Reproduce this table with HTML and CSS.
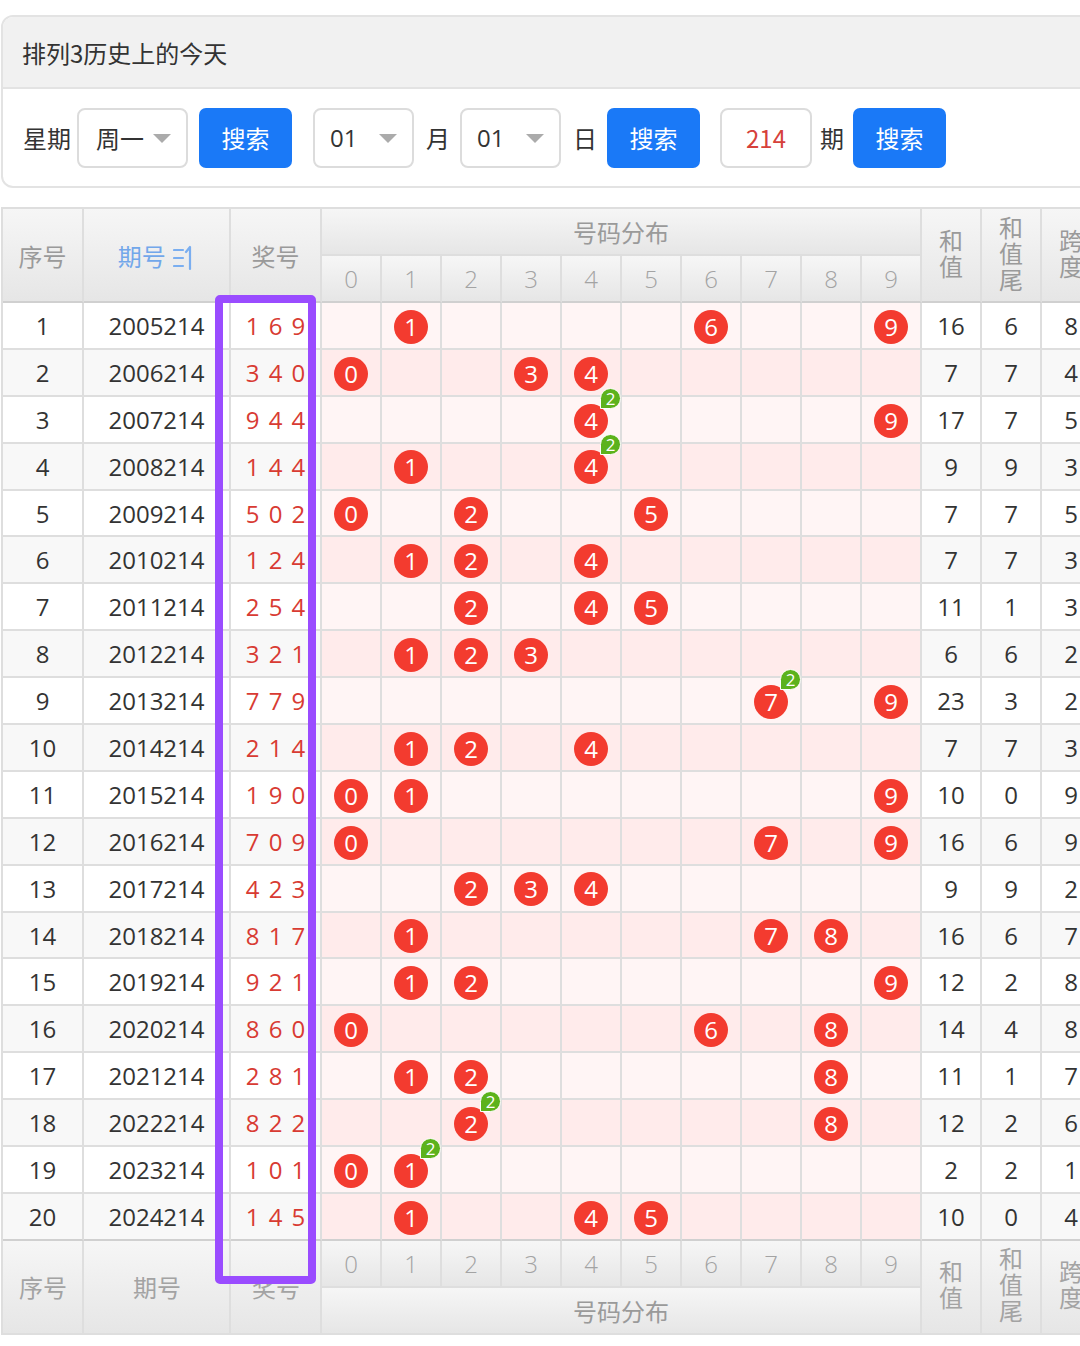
FILE: index.html
```html
<!DOCTYPE html>
<html lang="zh-CN">
<head>
<meta charset="utf-8">
<title>排列3历史上的今天</title>
<link rel="stylesheet" href="styles.css">
</head>
<body>
<div class="card">
  <div class="card-head">排列3历史上的今天</div>
  <div class="search">
    <span class="lbl lbl-week">星期</span>
    <div class="select sel-week"><span>周一</span><i class="caret"></i></div>
    <button class="btn btn-1">搜索</button>
    <div class="select sel-num"><span>01</span><i class="caret"></i></div>
    <span class="lbl lbl-mid">月</span>
    <div class="select sel-num"><span>01</span><i class="caret"></i></div>
    <span class="lbl lbl-mid">日</span>
    <button class="btn btn-2">搜索</button>
    <div class="input-issue">214</div>
    <span class="lbl lbl-issue">期</span>
    <button class="btn btn-3">搜索</button>
  </div>
</div>

<div class="table-wrap">
  <table class="trend">
    <colgroup>
      <col class="c-idx"><col class="c-issue"><col class="c-win">
      <col class="c-d"><col class="c-d"><col class="c-d"><col class="c-d"><col class="c-d">
      <col class="c-d"><col class="c-d"><col class="c-d"><col class="c-d"><col class="c-d">
      <col class="c-d"><col class="c-d"><col class="c-d">
    </colgroup>
    <thead>
      <tr>
        <th rowspan="2">序号</th>
        <th rowspan="2" class="sortable">期号 <svg class="sort-ico" viewBox="0 0 22 26" width="22" height="26"><path d="M1 5h9M1 13h9M1 21h9M17 2v22M17 2l-4 5" fill="none" stroke="#7aaef0" stroke-width="2.2" stroke-linecap="round"/></svg></th>
        <th rowspan="2">奖号</th>
        <th colspan="10" class="group">号码分布</th>
        <th rowspan="2"><span class="stack">和值</span></th>
        <th rowspan="2"><span class="stack">和值尾</span></th>
        <th rowspan="2"><span class="stack">跨度</span></th>
      </tr>
      <tr class="digits">
        <th>0</th><th>1</th><th>2</th><th>3</th><th>4</th><th>5</th><th>6</th><th>7</th><th>8</th><th>9</th>
      </tr>
    </thead>
    <tbody>
      <tr><td>1</td><td>2005214</td><td class="win">1 6 9</td><td class="d"></td><td class="d"><span class="ball">1</span></td><td class="d"></td><td class="d"></td><td class="d"></td><td class="d"></td><td class="d"><span class="ball">6</span></td><td class="d"></td><td class="d"></td><td class="d"><span class="ball">9</span></td><td>16</td><td>6</td><td>8</td></tr>
      <tr><td>2</td><td>2006214</td><td class="win">3 4 0</td><td class="d"><span class="ball">0</span></td><td class="d"></td><td class="d"></td><td class="d"><span class="ball">3</span></td><td class="d"><span class="ball">4</span></td><td class="d"></td><td class="d"></td><td class="d"></td><td class="d"></td><td class="d"></td><td>7</td><td>7</td><td>4</td></tr>
      <tr><td>3</td><td>2007214</td><td class="win">9 4 4</td><td class="d"></td><td class="d"></td><td class="d"></td><td class="d"></td><td class="d"><span class="ball">4<i class="badge">2</i></span></td><td class="d"></td><td class="d"></td><td class="d"></td><td class="d"></td><td class="d"><span class="ball">9</span></td><td>17</td><td>7</td><td>5</td></tr>
      <tr><td>4</td><td>2008214</td><td class="win">1 4 4</td><td class="d"></td><td class="d"><span class="ball">1</span></td><td class="d"></td><td class="d"></td><td class="d"><span class="ball">4<i class="badge">2</i></span></td><td class="d"></td><td class="d"></td><td class="d"></td><td class="d"></td><td class="d"></td><td>9</td><td>9</td><td>3</td></tr>
      <tr><td>5</td><td>2009214</td><td class="win">5 0 2</td><td class="d"><span class="ball">0</span></td><td class="d"></td><td class="d"><span class="ball">2</span></td><td class="d"></td><td class="d"></td><td class="d"><span class="ball">5</span></td><td class="d"></td><td class="d"></td><td class="d"></td><td class="d"></td><td>7</td><td>7</td><td>5</td></tr>
      <tr><td>6</td><td>2010214</td><td class="win">1 2 4</td><td class="d"></td><td class="d"><span class="ball">1</span></td><td class="d"><span class="ball">2</span></td><td class="d"></td><td class="d"><span class="ball">4</span></td><td class="d"></td><td class="d"></td><td class="d"></td><td class="d"></td><td class="d"></td><td>7</td><td>7</td><td>3</td></tr>
      <tr><td>7</td><td>2011214</td><td class="win">2 5 4</td><td class="d"></td><td class="d"></td><td class="d"><span class="ball">2</span></td><td class="d"></td><td class="d"><span class="ball">4</span></td><td class="d"><span class="ball">5</span></td><td class="d"></td><td class="d"></td><td class="d"></td><td class="d"></td><td>11</td><td>1</td><td>3</td></tr>
      <tr><td>8</td><td>2012214</td><td class="win">3 2 1</td><td class="d"></td><td class="d"><span class="ball">1</span></td><td class="d"><span class="ball">2</span></td><td class="d"><span class="ball">3</span></td><td class="d"></td><td class="d"></td><td class="d"></td><td class="d"></td><td class="d"></td><td class="d"></td><td>6</td><td>6</td><td>2</td></tr>
      <tr><td>9</td><td>2013214</td><td class="win">7 7 9</td><td class="d"></td><td class="d"></td><td class="d"></td><td class="d"></td><td class="d"></td><td class="d"></td><td class="d"></td><td class="d"><span class="ball">7<i class="badge">2</i></span></td><td class="d"></td><td class="d"><span class="ball">9</span></td><td>23</td><td>3</td><td>2</td></tr>
      <tr><td>10</td><td>2014214</td><td class="win">2 1 4</td><td class="d"></td><td class="d"><span class="ball">1</span></td><td class="d"><span class="ball">2</span></td><td class="d"></td><td class="d"><span class="ball">4</span></td><td class="d"></td><td class="d"></td><td class="d"></td><td class="d"></td><td class="d"></td><td>7</td><td>7</td><td>3</td></tr>
      <tr><td>11</td><td>2015214</td><td class="win">1 9 0</td><td class="d"><span class="ball">0</span></td><td class="d"><span class="ball">1</span></td><td class="d"></td><td class="d"></td><td class="d"></td><td class="d"></td><td class="d"></td><td class="d"></td><td class="d"></td><td class="d"><span class="ball">9</span></td><td>10</td><td>0</td><td>9</td></tr>
      <tr><td>12</td><td>2016214</td><td class="win">7 0 9</td><td class="d"><span class="ball">0</span></td><td class="d"></td><td class="d"></td><td class="d"></td><td class="d"></td><td class="d"></td><td class="d"></td><td class="d"><span class="ball">7</span></td><td class="d"></td><td class="d"><span class="ball">9</span></td><td>16</td><td>6</td><td>9</td></tr>
      <tr><td>13</td><td>2017214</td><td class="win">4 2 3</td><td class="d"></td><td class="d"></td><td class="d"><span class="ball">2</span></td><td class="d"><span class="ball">3</span></td><td class="d"><span class="ball">4</span></td><td class="d"></td><td class="d"></td><td class="d"></td><td class="d"></td><td class="d"></td><td>9</td><td>9</td><td>2</td></tr>
      <tr><td>14</td><td>2018214</td><td class="win">8 1 7</td><td class="d"></td><td class="d"><span class="ball">1</span></td><td class="d"></td><td class="d"></td><td class="d"></td><td class="d"></td><td class="d"></td><td class="d"><span class="ball">7</span></td><td class="d"><span class="ball">8</span></td><td class="d"></td><td>16</td><td>6</td><td>7</td></tr>
      <tr><td>15</td><td>2019214</td><td class="win">9 2 1</td><td class="d"></td><td class="d"><span class="ball">1</span></td><td class="d"><span class="ball">2</span></td><td class="d"></td><td class="d"></td><td class="d"></td><td class="d"></td><td class="d"></td><td class="d"></td><td class="d"><span class="ball">9</span></td><td>12</td><td>2</td><td>8</td></tr>
      <tr><td>16</td><td>2020214</td><td class="win">8 6 0</td><td class="d"><span class="ball">0</span></td><td class="d"></td><td class="d"></td><td class="d"></td><td class="d"></td><td class="d"></td><td class="d"><span class="ball">6</span></td><td class="d"></td><td class="d"><span class="ball">8</span></td><td class="d"></td><td>14</td><td>4</td><td>8</td></tr>
      <tr><td>17</td><td>2021214</td><td class="win">2 8 1</td><td class="d"></td><td class="d"><span class="ball">1</span></td><td class="d"><span class="ball">2</span></td><td class="d"></td><td class="d"></td><td class="d"></td><td class="d"></td><td class="d"></td><td class="d"><span class="ball">8</span></td><td class="d"></td><td>11</td><td>1</td><td>7</td></tr>
      <tr><td>18</td><td>2022214</td><td class="win">8 2 2</td><td class="d"></td><td class="d"></td><td class="d"><span class="ball">2<i class="badge">2</i></span></td><td class="d"></td><td class="d"></td><td class="d"></td><td class="d"></td><td class="d"></td><td class="d"><span class="ball">8</span></td><td class="d"></td><td>12</td><td>2</td><td>6</td></tr>
      <tr><td>19</td><td>2023214</td><td class="win">1 0 1</td><td class="d"><span class="ball">0</span></td><td class="d"><span class="ball">1<i class="badge">2</i></span></td><td class="d"></td><td class="d"></td><td class="d"></td><td class="d"></td><td class="d"></td><td class="d"></td><td class="d"></td><td class="d"></td><td>2</td><td>2</td><td>1</td></tr>
      <tr><td>20</td><td>2024214</td><td class="win">1 4 5</td><td class="d"></td><td class="d"><span class="ball">1</span></td><td class="d"></td><td class="d"></td><td class="d"><span class="ball">4</span></td><td class="d"><span class="ball">5</span></td><td class="d"></td><td class="d"></td><td class="d"></td><td class="d"></td><td>10</td><td>0</td><td>4</td></tr>
    </tbody>
    <tfoot>
      <tr class="digits">
        <th rowspan="2">序号</th>
        <th rowspan="2">期号</th>
        <th rowspan="2">奖号</th>
        <th>0</th><th>1</th><th>2</th><th>3</th><th>4</th><th>5</th><th>6</th><th>7</th><th>8</th><th>9</th>
        <th rowspan="2"><span class="stack">和值</span></th>
        <th rowspan="2"><span class="stack">和值尾</span></th>
        <th rowspan="2"><span class="stack">跨度</span></th>
      </tr>
      <tr>
        <th colspan="10" class="group">号码分布</th>
      </tr>
    </tfoot>
  </table>
  <div class="highlight-box"></div>
</div>
</body>
</html>
```

FILE: styles.css
```css
html, body {
  margin: 0;
  padding: 0;
}
body {
  width: 1080px;
  overflow-x: hidden;
  background: #fff;
  color: #333;
  font-family: "Open Sans", "Noto Sans CJK SC", sans-serif;
}

/* ---------- search card ---------- */
.card {
  margin: 15px 0 0 1px;
  width: 1120px;
  border: 2px solid #e3e3e3;
  border-radius: 12px;
  overflow: hidden;
  box-sizing: border-box;
}
.card-head {
  height: 70px;
  background: #f1f1f1;
  border-bottom: 2px solid #e3e3e3;
  display: flex;
  align-items: center;
  padding-left: 19px;
  font-family: "Noto Sans CJK SC", sans-serif;
  font-size: 24px;
  color: #333;
}
.search {
  height: 97px;
  display: flex;
  align-items: center;
  padding-left: 20px;
  font-family: "Noto Sans CJK SC", sans-serif;
}
.lbl {
  font-size: 24px;
  color: #333;
}
.lbl-week { margin-right: 6px; }
.lbl-mid { margin: 0 10px 0 12px; }
.lbl-issue { margin: 0 9px 0 8px; }

.select {
  height: 60px;
  box-sizing: border-box;
  border: 2px solid #dcdcdc;
  border-radius: 8px;
  background: #fff;
  display: flex;
  align-items: center;
  position: relative;
  font-size: 24px;
  color: #333;
}
.sel-week {
  width: 111px;
  padding-left: 17px;
  margin-right: 11px;
}
.sel-num {
  width: 101px;
  padding-left: 15px;
  font-family: "Open Sans", sans-serif;
}
.caret {
  position: absolute;
  right: 15px;
  top: 24px;
  width: 0;
  height: 0;
  border-left: 9px solid transparent;
  border-right: 9px solid transparent;
  border-top: 9px solid #ababab;
}
.btn {
  width: 93px;
  height: 60px;
  border: 0;
  border-radius: 7px;
  background: #1a79f7;
  color: #fff;
  font-family: "Noto Sans CJK SC", sans-serif;
  font-size: 24px;
  padding: 0;
}
.btn-1 { margin-right: 21px; }
.btn-2 { margin-right: 20px; }
.input-issue {
  width: 92px;
  height: 60px;
  box-sizing: border-box;
  border: 2px solid #dcdcdc;
  border-radius: 8px;
  display: flex;
  align-items: center;
  justify-content: center;
  font-size: 24px;
  color: #d6413b;
}

/* ---------- trend table ---------- */
.table-wrap {
  position: relative;
  margin-top: 19px;
  width: 1110px;
}
.trend {
  margin-left: 1px;
  table-layout: fixed;
  border-collapse: separate;
  border-spacing: 0;
  width: 1101px;
  border-left: 2px solid #dedede;
  border-top: 2px solid #dedede;
  font-size: 24px;
}
.c-idx { width: 81px; }
.c-issue { width: 147px; }
.c-win { width: 91px; }
.c-d { width: 60px; }

.trend th,
.trend td {
  border-right: 2px solid #dedede;
  border-bottom: 2px solid #dedede;
  padding: 0;
  text-align: center;
  box-sizing: border-box;
}
.trend th {
  background: linear-gradient(#f6f6f6, #e6e6e6);
  color: #9a9a9a;
  font-weight: normal;
  font-family: "Noto Sans CJK SC", sans-serif;
  height: 47px;
}
.trend tr.digits th {
  font-family: "Open Sans", sans-serif;
  font-weight: 300;
  color: #a3a3a3;
}
.trend thead tr:last-child th,
.trend thead th[rowspan] {
  border-bottom-color: #d0d0d0;
}
.sortable {
  color: #72a7ea !important;
}
.sort-ico {
  vertical-align: -5px;
  margin-left: 2px;
}
.stack {
  display: inline-block;
  width: 1em;
  line-height: 26px;
  word-break: break-all;
}

.trend tbody td {
  height: 46.9px;
  color: #333;
  background: #fff;
}
.trend tbody tr:nth-child(even) td {
  background: #f8f8f8;
}
.trend tbody td.d {
  background: #fff5f5;
}
.trend tbody tr:nth-child(even) td.d {
  background: #ffebeb;
}
.trend tbody td.win {
  color: #d83b33;
  word-spacing: 3px;
}
.trend tbody tr:last-child td {
  border-bottom-color: #d0d0d0;
}

.ball {
  position: relative;
  display: inline-flex;
  align-items: center;
  justify-content: center;
  width: 34px;
  height: 34px;
  border-radius: 50%;
  background: #f33b2f;
  color: #fff;
  font-size: 24px;
  line-height: 1;
  vertical-align: middle;
}
.badge {
  position: absolute;
  left: 26px;
  top: -16px;
  width: 21px;
  height: 21px;
  box-sizing: border-box;
  border: 1px solid #fff;
  border-radius: 50% 50% 50% 0;
  background: #5cb21c;
  color: #fff;
  font-style: normal;
  font-size: 17px;
  line-height: 19px;
  text-align: center;
}

.highlight-box {
  position: absolute;
  left: 215px;
  top: 88px;
  width: 101px;
  height: 989px;
  box-sizing: border-box;
  border: 8px solid #9a4cff;
  border-radius: 5px;
  pointer-events: none;
}
```
